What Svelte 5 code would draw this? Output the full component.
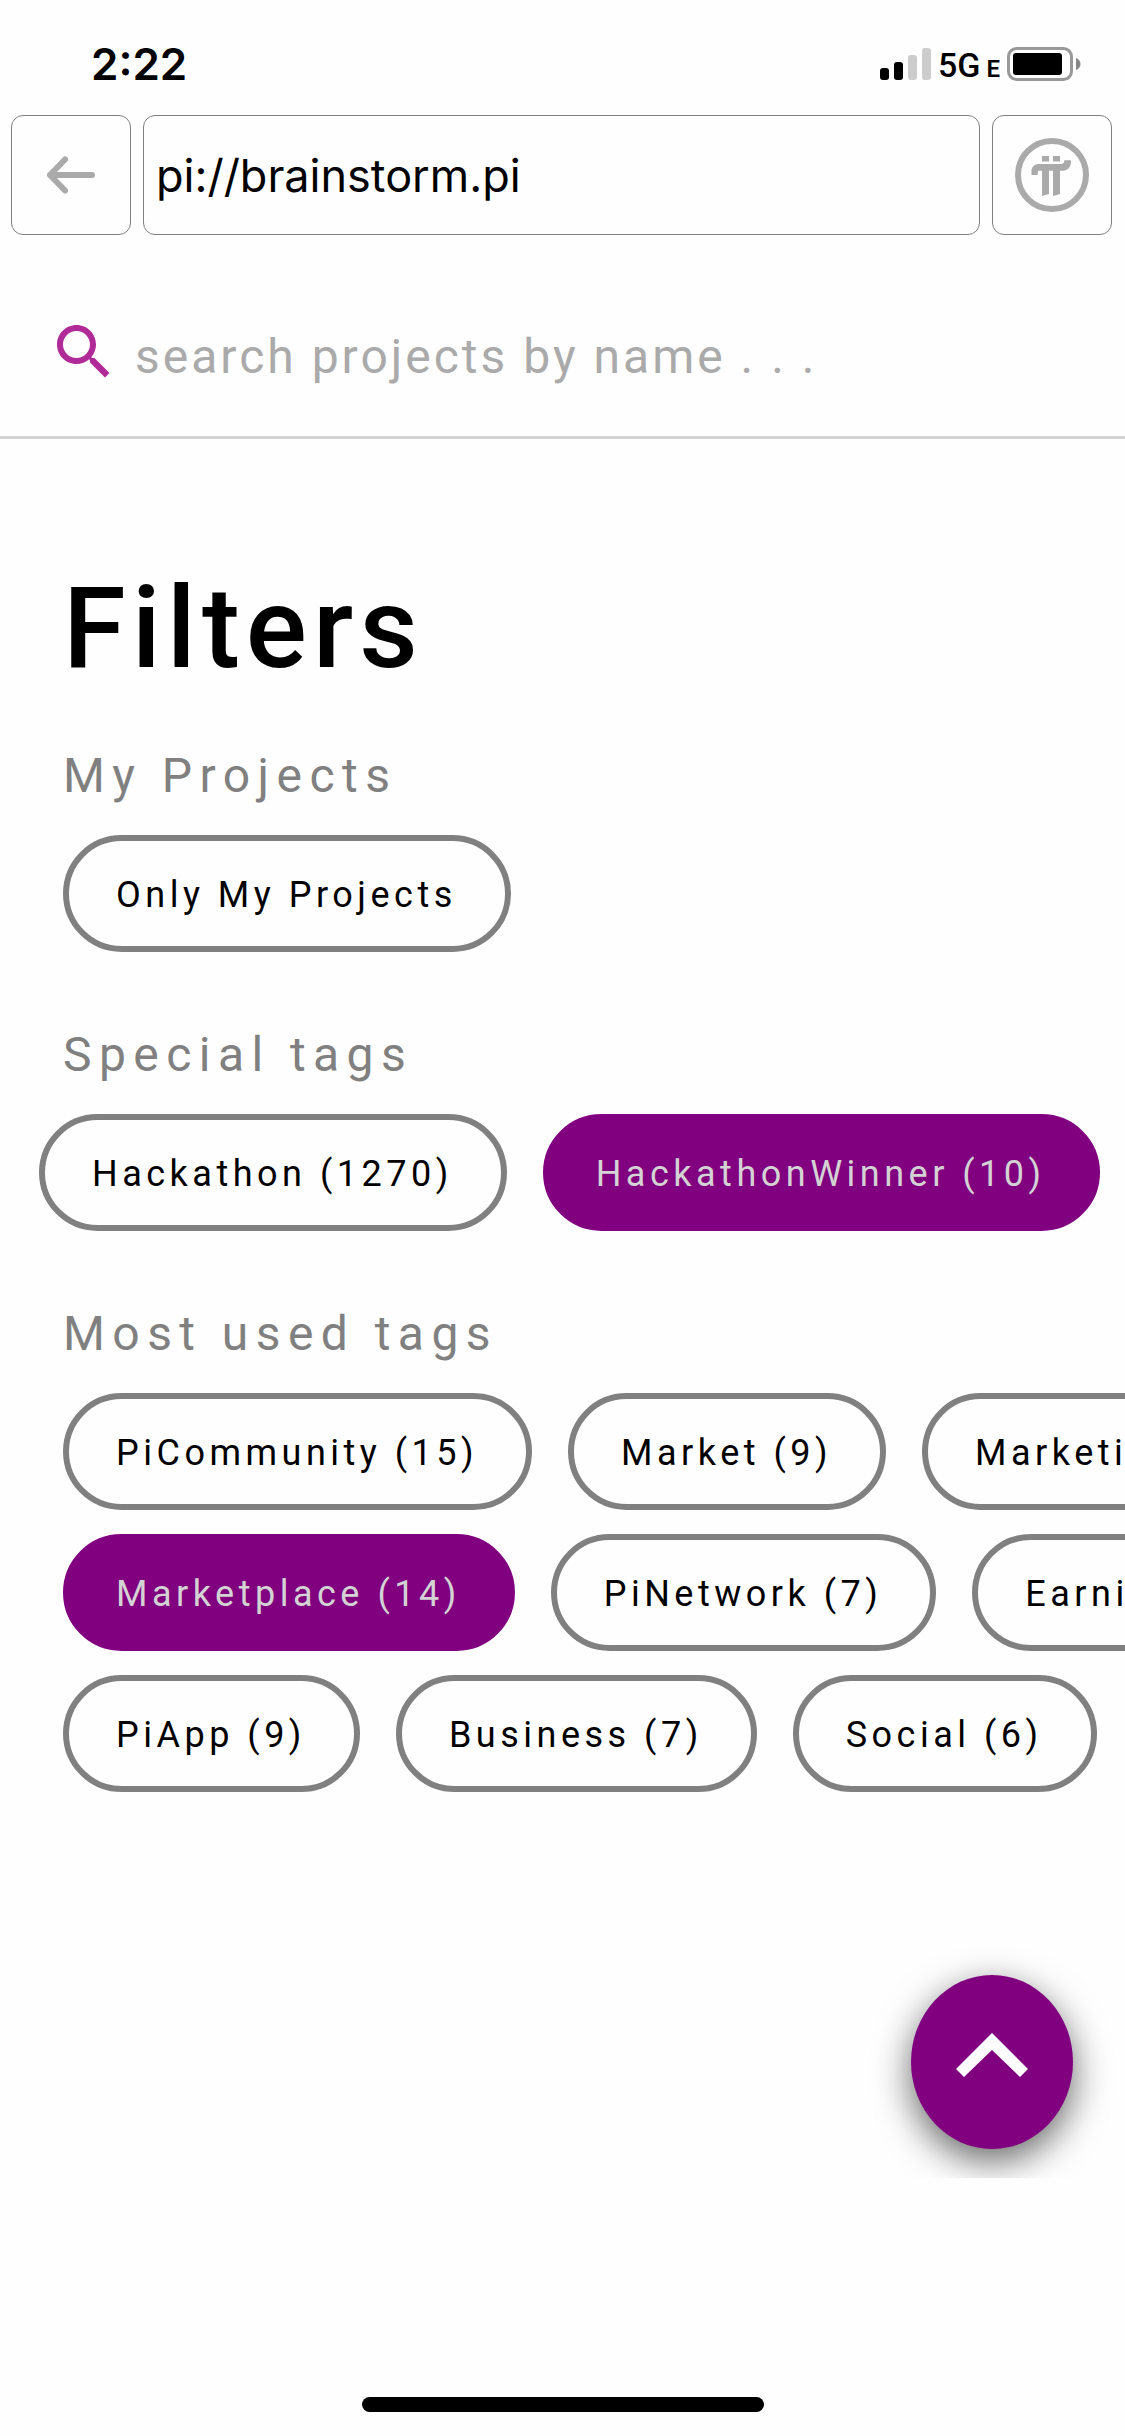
<script>
    let url = $state('pi://brainstorm.pi');
    let search = $state('');

    let groups = $state([
        {
            title: 'My Projects',
            rows: [
                [{ name: 'Only My Projects' }]
            ]
        },
        {
            title: 'Special tags',
            wide: true,
            rows: [
                [{ name: 'Hackathon', count: 1270 }, { name: 'HackathonWinner', count: 10, active: true }]
            ]
        },
        {
            title: 'Most used tags',
            rows: [
                [{ name: 'PiCommunity', count: 15 }, { name: 'Market', count: 9 }, { name: 'Marketing', count: 7 }],
                [{ name: 'Marketplace', count: 14, active: true }, { name: 'PiNetwork', count: 7 }, { name: 'Earning', count: 6 }],
                [{ name: 'PiApp', count: 9 }, { name: 'Business', count: 7 }, { name: 'Social', count: 6 }]
            ]
        }
    ]);

    function label(tag) {
        return tag.count ? `${tag.name} (${tag.count})` : tag.name;
    }

    function toTop() {
        window.scrollTo({ top: 0, behavior: 'smooth' });
    }
</script>

<div class="app">
    <div class="status">
        <span class="clock">2:22</span>
        <div class="indicators">
            <svg class="signal" viewBox="0 0 51 32" aria-hidden="true">
                <rect x="0" y="20" width="9" height="12" rx="3" />
                <rect x="14" y="14" width="9" height="18" rx="3" />
                <rect class="off" x="28" y="7" width="9" height="25" rx="3" />
                <rect class="off" x="42" y="0" width="9" height="32" rx="3" />
            </svg>
            <span class="network">5G<small>E</small></span>
            <svg class="battery" viewBox="0 0 74 34" aria-hidden="true">
                <rect class="shell" x="1.5" y="1.5" width="63" height="31" rx="8" />
                <rect x="6" y="6" width="49" height="22" rx="3" />
                <path class="nub" d="M69 11c3 1 4.5 3.5 4.5 6s-1.5 5-4.5 6z" />
            </svg>
        </div>
    </div>

    <nav class="browser">
        <button class="square" aria-label="Back">
            <svg class="arrow" viewBox="0 0 48 38">
                <path d="M45 19H3M18 3.5L3 19l15 15.5" />
            </svg>
        </button>
        <input class="url" type="text" aria-label="Address" bind:value={url} />
        <button class="square" aria-label="Pi Network home">
            <svg class="pi" viewBox="0 0 74 74">
                <circle cx="37" cy="37" r="34" />
                <path d="M27 18h7v5.5h-7zM38 18h7v5.5h-7z" />
                <path d="M16.5 37v-4c0-4 3-7 7-7H46c2.2 0 3.3-1 3.3-3.7H56V24c0 5-3.5 8.7-8 8.7h-3V56l-7 2V32.7h-4V56l-7 2V32.7h-3c-.7 0-1.2.5-1.2 1.3v3z" />
            </svg>
        </button>
    </nav>

    <label class="search">
        <svg viewBox="0 0 24 24" aria-hidden="true">
            <path d="M15.5 14h-.79l-.28-.27C15.41 12.59 16 11.11 16 9.5 16 5.91 13.09 3 9.5 3S3 5.91 3 9.5 5.91 16 9.5 16c1.61 0 3.09-.59 4.23-1.57l.27.28v.79l5 4.99L20.49 19l-4.99-5zm-6 0C7.01 14 5 11.99 5 9.5S7.01 5 9.5 5 14 7.01 14 9.5 11.99 14 9.5 14z" />
        </svg>
        <input type="text" aria-label="Search projects" placeholder="search projects by name . . ." bind:value={search} />
    </label>

    <main>
        <h1>Filters</h1>
        {#each groups as group}
            <section>
                <h2>{group.title}</h2>
                <div class="rows" class:wide={group.wide}>
                    {#each group.rows as row}
                        <div class="row">
                            {#each row as tag}
                                <button
                                    class="tag"
                                    class:active={tag.active}
                                    aria-pressed={!!tag.active}
                                    onclick={() => tag.active = !tag.active}
                                >{label(tag)}</button>
                            {/each}
                        </div>
                    {/each}
                </div>
            </section>
        {/each}

        <button class="top" aria-label="Back to top" onclick={toTop}>
            <svg viewBox="0 0 72 44">
                <path d="M36 0l36 36-8 8-28-27L8 44l-8-8z" />
            </svg>
        </button>
    </main>

    <footer>
        <div class="home"></div>
    </footer>
</div>

<style>
    :global(body) {
        margin: 0;
        background: #fefefe;
    }

    .app {
        min-height: 100vh;
        display: flex;
        flex-direction: column;
        overflow: hidden;
        font-family: Roboto, sans-serif;
        color: black;
    }

    button, input {
        font-family: inherit;
        color: inherit;
        margin: 0;
        box-sizing: border-box;
    }

    .status {
        height: 115px;
        padding: 12px 44px 0 91px;
        box-sizing: border-box;
        display: flex;
        align-items: center;
        justify-content: space-between;
        font-family: Inter, sans-serif;
    }

    .clock {
        font-size: 44px;
        font-weight: 600;
    }

    .indicators {
        display: flex;
        align-items: center;
        gap: 7px;
    }

    .signal {
        width: 51px;
        height: 32px;
    }

    .off {
        fill: #ccc;
    }

    .network {
        display: flex;
        align-items: baseline;
        gap: 6px;
        padding-top: 2px;
        font-family: Roboto, sans-serif;
        font-size: 34px;
        font-weight: 500;
    }

    .network small {
        font-size: 24px;
        font-weight: 600;
    }

    .battery {
        width: 74px;
        height: 34px;
    }

    .shell {
        fill: none;
        stroke: #999;
        stroke-width: 3;
    }

    .nub {
        fill: #888;
    }

    .browser {
        display: flex;
        gap: 12px;
        padding: 0 13px 0 11px;
    }

    .square {
        width: 120px;
        height: 120px;
        padding: 0;
        flex: none;
        display: flex;
        align-items: center;
        justify-content: center;
        background: none;
        border: 1px solid gray;
        border-radius: 12px;
    }

    .arrow {
        width: 48px;
        height: 38px;
        fill: none;
        stroke: #aaa;
        stroke-width: 6;
        stroke-linecap: round;
        stroke-linejoin: round;
    }

    .pi {
        width: 74px;
        height: 74px;
        fill: #aaa;
    }

    .pi circle {
        fill: none;
        stroke: #aaa;
        stroke-width: 6;
    }

    .url {
        flex: 1;
        min-width: 0;
        padding: 0 12px;
        background: none;
        border: 1px solid gray;
        border-radius: 12px;
        font-family: Inter, sans-serif;
        font-size: 45px;
    }

    .search {
        display: flex;
        align-items: center;
        gap: 15px;
        height: 204px;
        box-sizing: border-box;
        padding: 42px 48px 0;
        border-bottom: 3px solid lightgray;
    }

    .search svg {
        width: 72px;
        height: 72px;
        flex: none;
        margin-bottom: 10px;
        fill: #b02a98;
    }

    .search input {
        flex: 1;
        min-width: 0;
        padding: 0;
        border: none;
        outline: none;
        background: none;
        font-size: 48px;
        letter-spacing: 3px;
    }

    .search input::placeholder {
        color: #aaa;
        opacity: 1;
    }

    main {
        flex: 1;
        position: relative;
        overflow: hidden;
        padding: 122px 0 0 63px;
    }

    h1 {
        margin: 0 0 50px;
        font-size: 114px;
        line-height: 134px;
        font-weight: 500;
        letter-spacing: 6px;
    }

    section {
        margin-bottom: 72px;
    }

    h2 {
        margin: 0 0 28px;
        font-size: 48px;
        line-height: 62px;
        font-weight: 400;
        letter-spacing: 0.155em;
        color: gray;
    }

    .rows {
        display: flex;
        flex-direction: column;
        gap: 24px;
    }

    /* two long tags only fit when the row starts further out */
    .wide {
        margin-left: -24px;
    }

    .row {
        display: flex;
        gap: 36px;
    }

    .tag {
        flex: none;
        height: 117px;
        padding: 2px 48px 0 47px;
        background: none;
        border: 6px solid gray;
        border-radius: 59px;
        font-size: 36px;
        letter-spacing: 0.125em;
        white-space: nowrap;
    }

    .active {
        background: purple;
        border-color: purple;
        color: lightgray;
    }

    .top {
        position: absolute;
        right: 52px;
        bottom: 29px;
        width: 162px;
        height: 174px;
        padding: 0;
        display: flex;
        align-items: center;
        justify-content: center;
        background: purple;
        border: none;
        border-radius: 50%;
        box-shadow: 0 12px 36px rgba(0, 0, 0, 0.6);
    }

    .top svg {
        width: 72px;
        height: 44px;
        margin-bottom: 15px;
        fill: white;
    }

    footer {
        height: 258px;
        box-sizing: border-box;
        padding-bottom: 24px;
        display: flex;
        align-items: flex-end;
        justify-content: center;
    }

    .home {
        width: 402px;
        height: 15px;
        border-radius: 8px;
        background: black;
    }
</style>
